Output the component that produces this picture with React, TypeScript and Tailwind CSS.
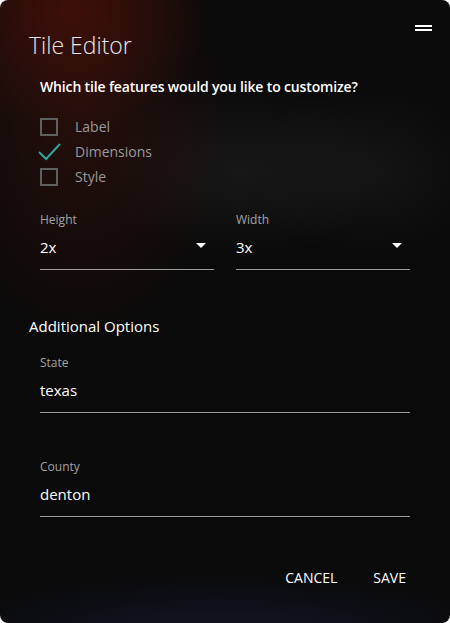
import React from "react";

const font = { fontFamily: '"Open Sans", "Noto Sans", sans-serif' };

function Box({ checked, label }: { checked?: boolean; label: string }) {
  return (
    <div className="flex h-[25px] items-center">
      <div className="flex w-[35px] items-center">
        {checked ? (
          <svg width="24" height="20" viewBox="0 0 24 20" className="-ml-[2px]">
            <polyline points="1,10 8,17 22,2" fill="none" stroke="#2fa69b" strokeWidth="2" />
          </svg>
        ) : (
          <div className="h-[18px] w-[18px] border-2 border-[#5f5f5f]" />
        )}
      </div>
      <span className="text-[14px] text-[#9a9a9a]">{label}</span>
    </div>
  );
}

function Field({ label, value, select }: { label: string; value: string; select?: boolean }) {
  return (
    <div className="flex flex-1 flex-col">
      <span className="text-[12px] leading-[16px] text-[#a3a3a3]">{label}</span>
      <div className="mt-[6px] flex h-[36px] items-start justify-between border-b border-[#9c9c9c] pt-[2px]">
        <span className="text-[15px] leading-[22px] text-white">{value}</span>
        {select && (
          <svg width="10" height="6" viewBox="0 0 10 6" className="mt-[7px] mr-[8px]">
            <polygon points="0,0 10,0 5,5" fill="#ffffff" />
          </svg>
        )}
      </div>
    </div>
  );
}

export default function App() {
  return (
    <div className="h-[623px] w-[450px] bg-white" style={font}>
      <div className="relative flex h-full flex-col rounded-[8px] bg-[#0a0a0a] bg-[radial-gradient(ellipse_140px_120px_at_70px_10px,rgba(75,16,8,0.75),transparent),radial-gradient(ellipse_150px_240px_at_80px_110px,rgba(70,20,10,0.45),transparent),radial-gradient(ellipse_140px_90px_at_240px_170px,rgba(40,40,40,0.45),transparent),radial-gradient(ellipse_120px_90px_at_370px_170px,rgba(40,40,40,0.35),transparent),radial-gradient(ellipse_300px_60px_at_220px_630px,rgba(25,30,60,0.5),transparent)]">
        <div className="flex items-start justify-between pl-[29px] pr-[18px] pt-[29px]">
          <h1 className="text-[23px] font-light leading-[32px] text-[#e8e8e8]">Tile Editor</h1>
          <div className="-mt-[4px] flex flex-col gap-[2px]">
            <div className="h-[2px] w-[17px] bg-white" />
            <div className="h-[2px] w-[17px] bg-white" />
          </div>
        </div>

        <div className="flex flex-col px-[40px]">
          <p className="mt-[16px] text-[14px] font-semibold leading-[20px] tracking-[-0.15px] text-white">
            Which tile features would you like to customize?
          </p>
          <div className="mt-[17px] flex flex-col">
            <Box label="Label" />
            <Box checked label="Dimensions" />
            <Box label="Style" />
          </div>
          <div className="mt-[23px] flex gap-[22px]">
            <Field label="Height" value="2x" select />
            <Field label="Width" value="3x" select />
          </div>
        </div>

        <h2 className="mt-[45px] pl-[29px] text-[15px] leading-[22px] text-white">Additional Options</h2>

        <div className="flex flex-col gap-[46px] px-[40px] pt-[18px]">
          <Field label="State" value="texas" />
          <Field label="County" value="denton" />
        </div>

        <div className="mt-auto flex justify-end gap-[36px] pb-[35px] pr-[44px]">
          <button className="text-[14px] leading-[20px] text-white">CANCEL</button>
          <button className="text-[14px] leading-[20px] text-white">SAVE</button>
        </div>
      </div>
    </div>
  );
}
